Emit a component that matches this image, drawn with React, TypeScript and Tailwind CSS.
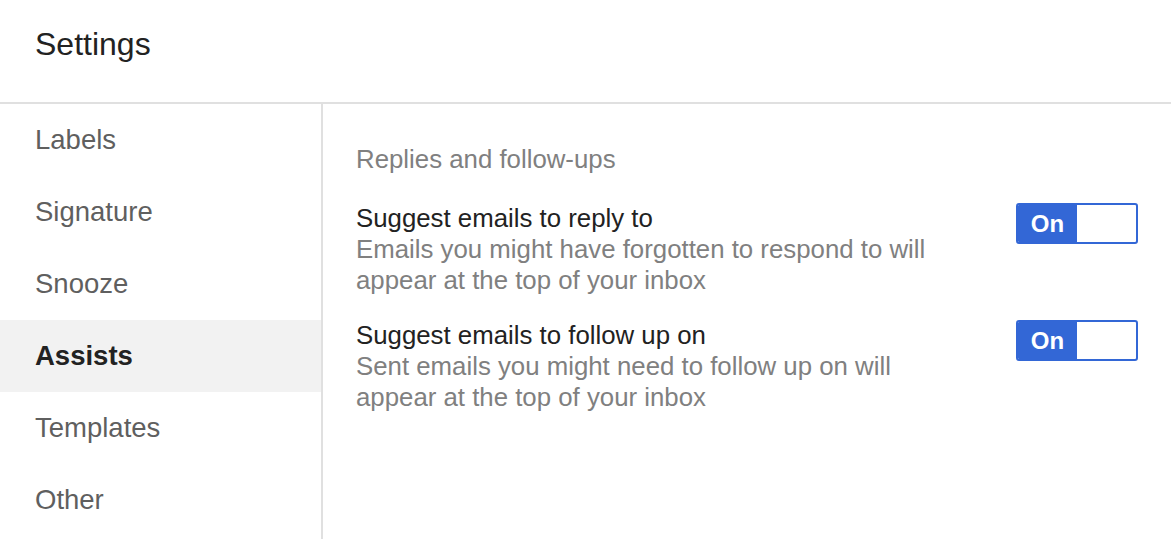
import React from "react";

const font = { fontFamily: '"Liberation Sans", Arial, sans-serif' };

function Toggle() {
  return (
    <div className="flex h-[41px] w-[122px] shrink-0 overflow-hidden rounded-[3px] border-2 border-[#3367d6] bg-white">
      <div className="flex w-[59px] items-center justify-center bg-[#3367d6] text-[24px] font-bold text-white">
        On
      </div>
      <div className="flex-1" />
    </div>
  );
}

function Row({ title, desc }: { title: string; desc: string }) {
  return (
    <div className="flex items-start justify-between">
      <div className="w-[600px] text-[25.8px] leading-[31px]">
        <div className="text-[#222]">{title}</div>
        <div className="text-[#808080]">{desc}</div>
      </div>
      <Toggle />
    </div>
  );
}

export default function App() {
  const items = ["Labels", "Signature", "Snooze", "Assists", "Templates", "Other"];
  return (
    <div className="h-[539px] w-[1171px] overflow-hidden bg-white" style={font}>
      <div className="flex h-[104px] items-center border-b-2 border-[#e0e0e0] pb-[14px] pl-[35px] text-[32px] text-[#222]">
        Settings
      </div>
      <div className="flex">
        <div className="h-[435px] w-[323px] shrink-0 border-r-2 border-[#e0e0e0]">
          {items.map((it) => (
            <div
              key={it}
              className={
                it === "Assists"
                  ? "flex h-[72px] items-center bg-[#f2f2f2] pl-[35px] text-[27.5px] font-bold text-[#222]"
                  : "flex h-[72px] items-center pl-[35px] text-[27.5px] text-[#5f5f5f]"
              }
            >
              {it}
            </div>
          ))}
        </div>
        <div className="flex-1 pl-[33px] pr-[33px] pt-[40px]">
          <div className="text-[25.8px] leading-[31px] text-[#808080]">Replies and follow-ups</div>
          <div className="mt-[28px] flex flex-col gap-[24px]">
            <Row
              title="Suggest emails to reply to"
              desc="Emails you might have forgotten to respond to will appear at the top of your inbox"
            />
            <Row
              title="Suggest emails to follow up on"
              desc="Sent emails you might need to follow up on will appear at the top of your inbox"
            />
          </div>
        </div>
      </div>
    </div>
  );
}
